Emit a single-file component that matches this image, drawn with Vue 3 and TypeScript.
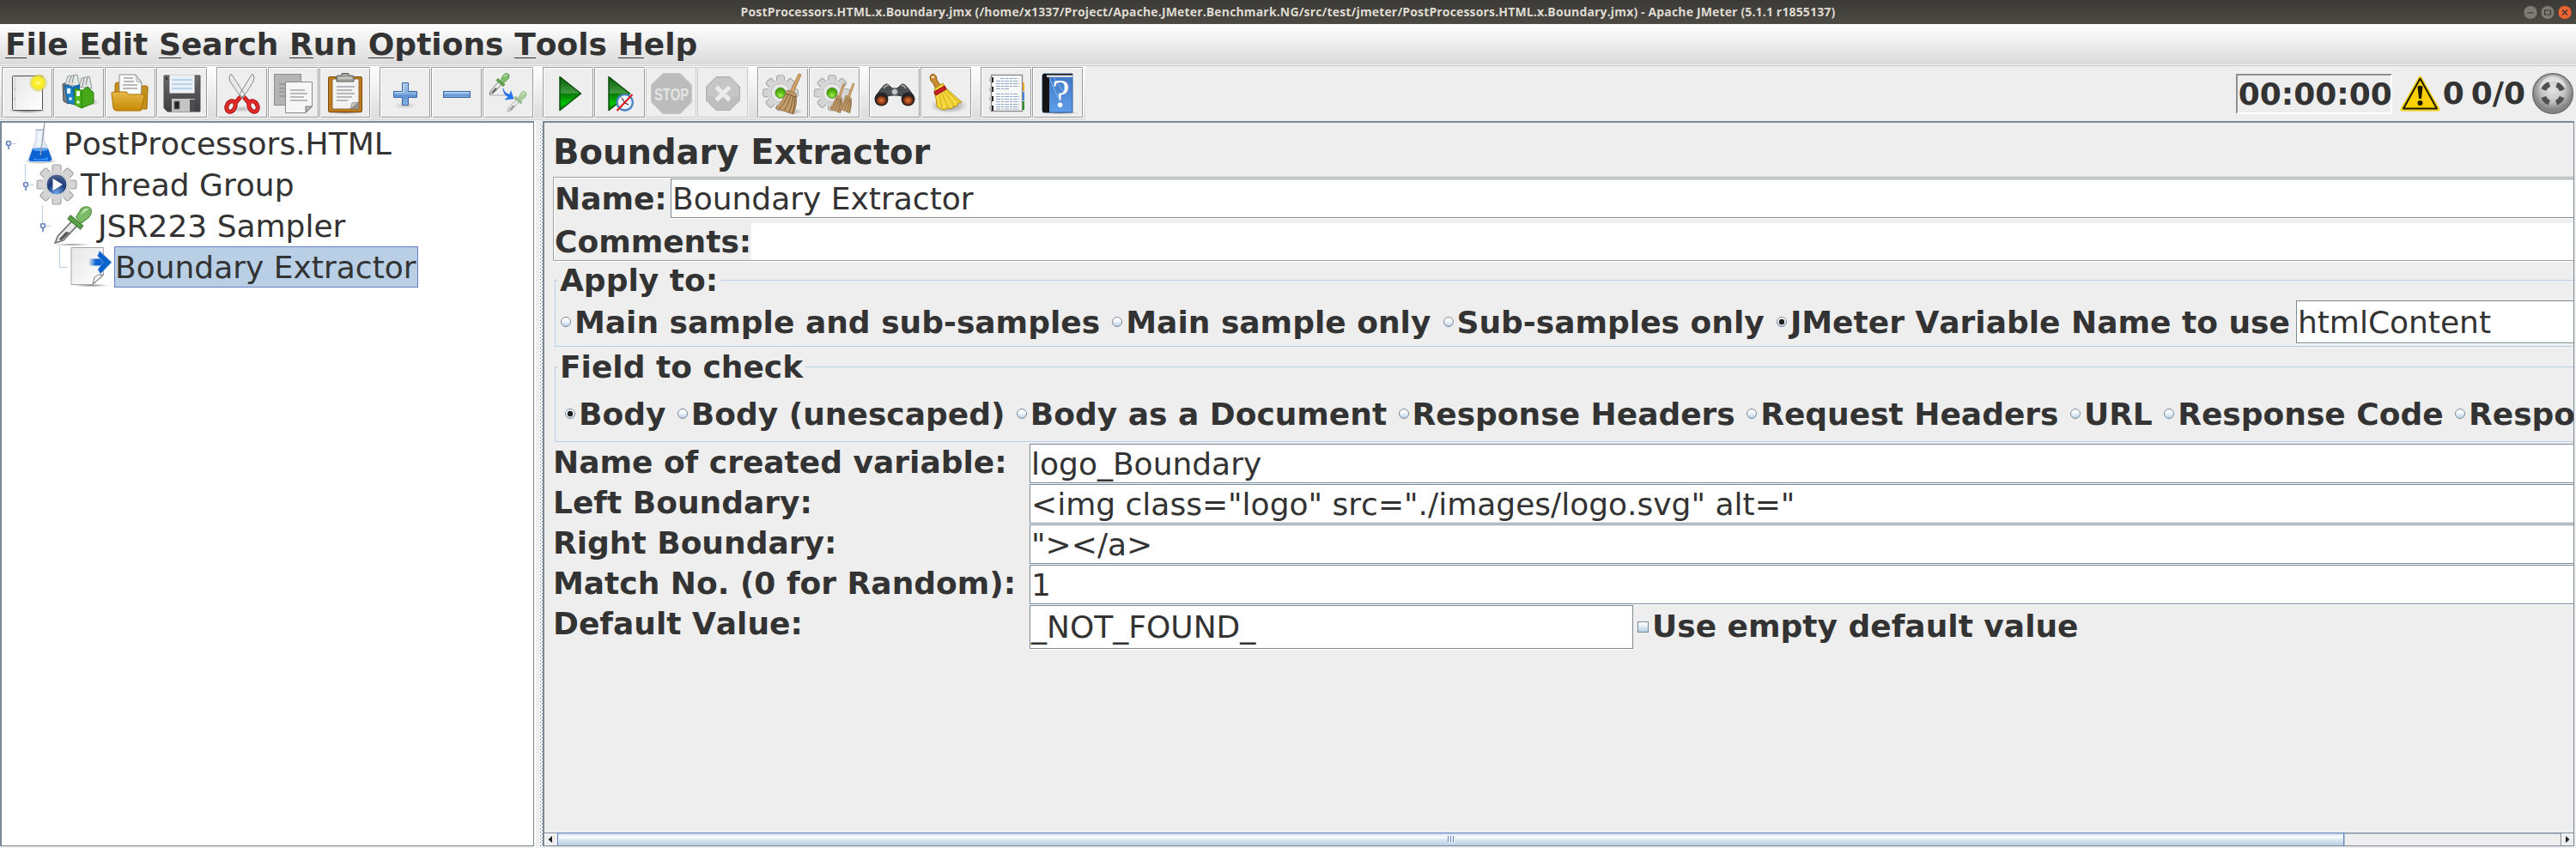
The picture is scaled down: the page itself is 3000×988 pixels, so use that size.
<script setup lang="ts">
interface Choice { label: string; selected?: boolean }
interface ToolButton { icon: string; disabled?: boolean }
interface TreeRow { icon: string; label: string; selected?: boolean }
interface Field { label: string; value: string }

const windowTitle =
  'PostProcessors.HTML.x.Boundary.jmx (/home/x1337/Project/Apache.JMeter.Benchmark.NG/src/test/jmeter/PostProcessors.HTML.x.Boundary.jmx) - Apache JMeter (5.1.1 r1855137)'

const menus: string[] = ['File', 'Edit', 'Search', 'Run', 'Options', 'Tools', 'Help']

const toolGroups: ToolButton[][] = [
  [{ icon: 'new' }, { icon: 'templates' }, { icon: 'open' }, { icon: 'save' }],
  [{ icon: 'cut' }, { icon: 'copy' }, { icon: 'paste' }],
  [{ icon: 'plus' }, { icon: 'minus' }, { icon: 'toggle' }],
  [{ icon: 'start' }, { icon: 'startNoPause' }, { icon: 'stop', disabled: true }, { icon: 'shutdown', disabled: true }],
  [{ icon: 'clear' }, { icon: 'clearAll' }],
  [{ icon: 'search' }, { icon: 'resetSearch' }],
  [{ icon: 'functions' }, { icon: 'help' }],
]

const tree: TreeRow[] = [
  { icon: 'flask', label: 'PostProcessors.HTML' },
  { icon: 'threads', label: 'Thread Group' },
  { icon: 'sampler', label: 'JSR223 Sampler' },
  { icon: 'extractor', label: 'Boundary Extractor', selected: true },
]

const applyTo: Choice[] = [
  { label: 'Main sample and sub-samples' },
  { label: 'Main sample only' },
  { label: 'Sub-samples only' },
  { label: 'JMeter Variable Name to use', selected: true },
]

const fieldToCheck: Choice[] = [
  { label: 'Body', selected: true },
  { label: 'Body (unescaped)' },
  { label: 'Body as a Document' },
  { label: 'Response Headers' },
  { label: 'Request Headers' },
  { label: 'URL' },
  { label: 'Response Code' },
  { label: 'Respo' },
]

const fields: Field[] = [
  { label: 'Name of created variable:', value: 'logo_Boundary' },
  { label: 'Left Boundary:', value: '<img class="logo" src="./images/logo.svg" alt="' },
  { label: 'Right Boundary:', value: '"></a>' },
  { label: 'Match No. (0 for Random):', value: '1' },
]

const teeth: number[] = [0, 45, 90, 135, 180, 225, 270, 315]
</script>

<template>
  <div class="window">
    <svg class="defs" width="0" height="0">
      <defs>
        <linearGradient id="gBlue" x1="0" y1="0" x2="0" y2="1"><stop offset="0" stop-color="#aecbee" /><stop offset=".5" stop-color="#86aede" /><stop offset=".55" stop-color="#5f92d0" /><stop offset="1" stop-color="#8ab4e4" /></linearGradient>
        <linearGradient id="gGreen" x1="0" y1="0" x2="0" y2="1"><stop offset="0" stop-color="#0a5c0a" /><stop offset=".48" stop-color="#3f9a3f" /><stop offset=".52" stop-color="#067a06" /><stop offset=".8" stop-color="#00c400" /><stop offset="1" stop-color="#057005" /></linearGradient>
        <linearGradient id="gFolder" x1="0" y1="0" x2="0" y2="1"><stop offset="0" stop-color="#e8b84a" /><stop offset="1" stop-color="#c78a05" /></linearGradient>
        <linearGradient id="gPage" x1="0" y1="0" x2="1" y2="1"><stop offset="0" stop-color="#e6e6e6" /><stop offset="1" stop-color="#fff" /></linearGradient>
        <linearGradient id="gDark" x1="0" y1="0" x2="0" y2="1"><stop offset="0" stop-color="#6a6a6c" /><stop offset="1" stop-color="#3e3e42" /></linearGradient>
        <linearGradient id="gFlask" x1="0" y1="0" x2="1" y2="0"><stop offset="0" stop-color="#c5d6f0" /><stop offset=".5" stop-color="#f4f8fd" /><stop offset="1" stop-color="#b4c6e6" /></linearGradient>
        <linearGradient id="gBook" x1="0" y1="0" x2="0" y2="1"><stop offset="0" stop-color="#3f78c4" /><stop offset="1" stop-color="#5f9de8" /></linearGradient>
        <linearGradient id="gArrow" x1="0" y1="0" x2="1" y2="0"><stop offset="0" stop-color="#0a63cf" stop-opacity="0" /><stop offset=".5" stop-color="#0a63cf" /></linearGradient>
        <radialGradient id="gSun"><stop offset="0" stop-color="#fffbb0" /><stop offset=".3" stop-color="#fff02a" /><stop offset=".65" stop-color="#f4e92e" /><stop offset="1" stop-color="#b5a950" stop-opacity="0" /></radialGradient>
        <radialGradient id="gShadow"><stop offset="0" stop-color="#000" stop-opacity=".45" /><stop offset="1" stop-color="#000" stop-opacity="0" /></radialGradient>
        <radialGradient id="gLed" cx=".5" cy=".75"><stop offset="0" stop-color="#a4f04a" /><stop offset="1" stop-color="#4aa80c" /></radialGradient>
        <radialGradient id="gLens"><stop offset="0" stop-color="#e0783c" /><stop offset=".7" stop-color="#8c3a16" /><stop offset="1" stop-color="#2c1a14" /></radialGradient>
        <radialGradient id="gBall" cx=".5" cy=".4"><stop offset="0" stop-color="#e4e4e4" /><stop offset=".6" stop-color="#c4c4c4" /><stop offset="1" stop-color="#858585" /></radialGradient>
        <radialGradient id="gNavy" cx=".5" cy=".9" r=".8"><stop offset="0" stop-color="#6fa4e6" /><stop offset=".6" stop-color="#1b3a78" /><stop offset="1" stop-color="#4a5f88" /></radialGradient>
        <pattern id="bumps" width="4" height="4" patternUnits="userSpaceOnUse">
          <rect x="0" y="0" width="1" height="1" fill="#fff" /><rect x="1" y="1" width="1" height="1" fill="#7a8a99" />
          <rect x="2" y="2" width="1" height="1" fill="#fff" /><rect x="3" y="3" width="1" height="1" fill="#7a8a99" />
        </pattern>
        <g id="dropper">
          <path d="M5 43 L8 35 L26 15 L32 20 L14 40 Z" fill="#e9e9e9" stroke="#6d6d6d" stroke-width="1.5" />
          <path d="M9 39 L17 30 L21 31 L12 40Z" fill="#555" />
          <path d="M22 11 L36 23 L33 27 L19 15Z" fill="#5da04a" stroke="#3d7a2c" />
          <path d="M28 13 L34 3 Q41 -2 45 4 Q46 11 40 15 L34 20Z" fill="#7cbc68" stroke="#4d8f3c" />
          <path d="M33 10 L37 4 Q40 2 42 4 Z" fill="#c3e4b8" />
        </g>
        <g id="gear">
          <rect v-for="a in teeth" :key="a" x="-4.5" y="-20.5" width="9" height="12" rx="2" fill="#d4d4d4" stroke="#a2a2a2" :transform="`rotate(${a})`" />
          <circle r="15" fill="#d6d6d6" /><circle r="11" fill="#e6e6e6" stroke="#bdbdbd" />
        </g>
        <g id="broom">
          <path d="M27 0 L30 1 L21 22 L17 21Z" fill="#d3a36a" stroke="#98703f" stroke-width=".8" />
          <path d="M14 19 L24 23 Q26 34 21 47 Q12 44 0 40 Q10 31 14 19Z" fill="#c29b6a" stroke="#8c6a40" stroke-width=".8" />
          <path d="M13 23 L24 27 M15 24 Q11 35 4 41 M18 25 Q15 37 10 43 M21 26 Q19 38 16 45 M23 27 Q23 38 20 46" fill="none" stroke="#7b5a34" stroke-width="1" />
        </g>
      </defs>
    </svg>

    <header class="titlebar">
      <span class="caption">{{ windowTitle }}</span>
      <div class="controls">
        <svg width="56" height="17" viewBox="0 0 56 17">
          <circle cx="8" cy="8.5" r="8" fill="#7c7b75" stroke="#35342f" stroke-width=".6" />
          <circle cx="28" cy="8.5" r="8" fill="#7c7b75" stroke="#35342f" stroke-width=".6" />
          <circle cx="48" cy="8.5" r="8" fill="#ec6336" stroke="#35342f" stroke-width=".6" />
          <path d="M4 9H12 M24.500 6H31.500V11H24.500Z M45 5.500L51 11.500M51 5.500L45 11.500" fill="none" stroke="#35342f" stroke-width="1.200" />
        </svg>
      </div>
    </header>

    <nav class="menubar">
      <span v-for="m in menus" :key="m" class="menu"><u>{{ m[0] }}</u>{{ m.slice(1) }}</span>
    </nav>

    <div class="toolrow">
      <div class="toolbar">
        <div v-for="(group, gi) in toolGroups" :key="gi" class="toolgroup">
          <button v-for="b in group" :key="b.icon" class="tool" :class="{ disabled: b.disabled }">
            <svg width="59" height="59" viewBox="0 0 59 59">
              <g v-if="b.icon === 'new'">
                <ellipse cx="30" cy="50" rx="22" ry="3" fill="url(#gShadow)" />
                <rect x="12.500" y="9.500" width="35" height="40" rx="1" fill="url(#gPage)" stroke="#4c4c4c" />
                <path d="M15.500 11V48" stroke="#d2d2d2" /><path d="M15 24v2M15 35v2" stroke="#aaa" />
                <circle cx="42.500" cy="17.500" r="11" fill="url(#gSun)" />
              </g>
              <g v-else-if="b.icon === 'templates'">
                <ellipse cx="36" cy="40" rx="18" ry="5" fill="url(#gShadow)" />
                <path d="M11 19L18 16V42L12 39Z" fill="#7a7f86" stroke="#474b50" />
                <path d="M14 19L17 10L28 8L31 22Z M30 22L33 12L42 10L45 24Z" fill="#e4e6e6" stroke="#8f9898" />
                <path d="M18 18L21 10M22 18L24 9M34 21L36 12M38 20L40 11" stroke="#7d8787" fill="none" />
                <path d="M13 20L22 22L26 43L17 41Z" fill="#1f83c8" stroke="#0e5a94" />
                <path d="M22 22L31 19V40L26 43Z" fill="#0f6cb4" />
                <path d="M25 24L33 26V47L25 43Z" fill="#4fb81c" stroke="#2d8a0a" />
                <path d="M33 27L40 22L47 29V41L33 47Z" fill="#46a81a" stroke="#2b8208" />
                <rect x="16" y="24" width="4" height="6" fill="#e8f2fa" /><rect x="27" y="27" width="4" height="6" fill="#eefbe8" />
                <circle cx="20" cy="36" r="1.800" fill="#e8f2fa" /><circle cx="29" cy="40" r="1.800" fill="#eefbe8" />
              </g>
              <g v-else-if="b.icon === 'open'">
                <path d="M12 20Q12 17 15 17H22V30H12Z M36 21H48Q51 21 50 25L49 48H36Z" fill="#c48f1c" stroke="#9c6c07" />
                <path d="M17 8H36L43 17L42 34H17Z" fill="#fbfbfb" stroke="#8f8f8f" /><path d="M36 8L37 16L43 18Z" fill="#d9e2de" stroke="#999" stroke-width=".7" />
                <path d="M22 12H33M22 16H34M21 20H38M21 24H38" stroke="#777" />
                <path d="M8 30Q8 28 11 28H25L28 31H44Q47 31 46 34L42 50H14Q11 50 10 47Z" fill="url(#gFolder)" stroke="#a87206" />
              </g>
              <g v-else-if="b.icon === 'save'">
                <path d="M9 9H51V51H13L9 47Z" fill="url(#gDark)" stroke="#4a4a4c" />
                <rect x="16" y="9" width="28" height="20" fill="#e9f1f8" stroke="#fff" /><path d="M18 14H42M18 19H42M18 24H42" stroke="#8fb2d4" />
                <rect x="18" y="36" width="27" height="15" fill="#c4c4c4" /><rect x="21" y="39" width="6" height="9" fill="#222" stroke="#777" /><rect x="39" y="37" width="6" height="14" fill="#4e4e50" />
                <rect x="11" y="11" width="2" height="3" fill="#2e2e30" />
              </g>
              <g v-else-if="b.icon === 'cut'">
                <ellipse cx="30" cy="48" rx="14" ry="4" fill="url(#gShadow)" opacity=".5" />
                <path d="M16 8Q14 11 16 16L29 35L33 31L18 8Q17 7 16 8Z M43 8Q45 11 43 16L31 35L27 31L41 8Q42 7 43 8Z" fill="#eaeaea" stroke="#8a8a8a" />
                <g fill="none" stroke="#a31414" stroke-width="5"><ellipse cx="17" cy="45" rx="4.800" ry="6.500" transform="rotate(28 17 45)" /><ellipse cx="43" cy="45" rx="4.800" ry="6.500" transform="rotate(-28 43 45)" /><path d="M22 41L28 34M38 41L32 34" /></g>
                <g fill="none" stroke="#e32a2a" stroke-width="3.200"><ellipse cx="17" cy="45" rx="4.800" ry="6.500" transform="rotate(28 17 45)" /><ellipse cx="43" cy="45" rx="4.800" ry="6.500" transform="rotate(-28 43 45)" /><path d="M22 41L28 34M38 41L32 34" /></g>
              </g>
              <g v-else-if="b.icon === 'copy'">
                <rect x="7.500" y="7.500" width="31" height="36" fill="#b4b4b4" stroke="#8f8f8f" /><path d="M13 19H33M13 24H33M13 28H33M13 33H20" stroke="#9a9a9a" stroke-width="2" />
                <path d="M20.500 16.500H51.500V45L44 52.500H20.500Z" fill="#f6f6f6" stroke="#8a8a8a" /><path d="M51 45H44V52Z" fill="#b9bab5" stroke="#777" />
                <path d="M26 26H43M26 30H46M26 34H42M26 38H46" stroke="#b9b9b9" stroke-width="1.800" />
              </g>
              <g v-else-if="b.icon === 'paste'">
                <ellipse cx="30" cy="52" rx="22" ry="2" fill="url(#gShadow)" />
                <rect x="10.500" y="10.500" width="39" height="41" rx="1.500" fill="#c07a1e" stroke="#7e4c0a" />
                <path d="M15 13H46V48H15Z" fill="#f3f3f3" stroke="#8f6a38" /><path d="M46 40L38 41L36 48H46Z" fill="#8d8f88" /><path d="M38 41L46 40L36 48Z" fill="#c9cac4" stroke="#777" stroke-width=".6" />
                <path d="M20 22H41M20 26H38M20 30H41M20 34H38M20 38H33" stroke="#b8b8b8" stroke-width="1.800" />
                <path d="M20 10Q20 9 22 9H26V6.500H34V9H38Q40 9 40 11V16H20Z" fill="#a3a49d" stroke="#5b5c57" /><path d="M22 12H38" stroke="#d2d3cd" stroke-width="1.500" />
              </g>
              <g v-else-if="b.icon === 'plus'">
                <ellipse cx="30" cy="44" rx="14" ry="4" fill="url(#gShadow)" opacity=".4" />
                <path d="M26.500 17.500H33.500V27.500H43.500V34.500H33.500V43.500H26.500V34.500H16.500V27.500H26.500Z" fill="url(#gBlue)" stroke="#3565a5" />
                <path d="M27.500 18.500V28.500H17.500" fill="none" stroke="#c4dbf5" />
              </g>
              <g v-else-if="b.icon === 'minus'">
                <rect x="14.500" y="27.500" width="31" height="7" fill="url(#gBlue)" stroke="#3565a5" /><path d="M15.500 28.500H44.500" stroke="#bcd5f2" />
              </g>
              <g v-else-if="b.icon === 'toggle'">
                <path d="M8 32H28" stroke="#aaa" /><use href="#dropper" transform="translate(5 6) scale(.58)" />
                <use href="#dropper" transform="translate(26 27) scale(.56)" opacity=".6" />
                <path d="M24 24Q26 31 32 31L33 27L36 36L26 37L30 34Q24 31 24 24Z" fill="#2277ee" stroke="#1a66dd" stroke-width=".6" />
              </g>
              <path v-else-if="b.icon === 'start'" d="M20 10.500L44.500 30L20 49.500Z" fill="url(#gGreen)" stroke="#0a4d0a" stroke-linejoin="round" stroke-width="1.500" />
              <g v-else-if="b.icon === 'startNoPause'">
                <path d="M17 10.500L41.500 30L17 49.500Z" fill="url(#gGreen)" stroke="#0a4d0a" stroke-linejoin="round" stroke-width="1.500" />
                <circle cx="35.700" cy="40.300" r="9.200" fill="#eef3fa" stroke="#4a82c4" stroke-width="2.400" /><path d="M32 35L36 41L40 43" fill="none" stroke="#333" stroke-width="1.200" />
                <path d="M26.500 50L44.500 31" stroke="#e01818" stroke-width="2" />
              </g>
              <g v-else-if="b.icon === 'stop'">
                <path d="M20 6.500H40L53.500 20V40L40 53.500H20L6.500 40V20Z" fill="#bcbcbc" stroke="#c6c6c6" />
                <text x="30" y="37.500" text-anchor="middle" textLength="40" lengthAdjust="spacingAndGlyphs" class="stop-text">STOP</text>
              </g>
              <g v-else-if="b.icon === 'shutdown'">
                <path d="M22 10.500H38L49.500 22V38L38 49.500H22L10.500 38V22Z" fill="#bdbdbd" stroke="#b2b2b2" />
                <path d="M12 32Q30 38 48 32V22L38 12H22L12 22Z" fill="#c6c6c6" />
                <path d="M20.500 24L24 20.500L30 26.500L36 20.500L39.500 24L33.500 30L39.500 36L36 39.500L30 33.500L24 39.500L20.500 36L26.500 30Z" fill="#ececec" />
              </g>
              <g v-else-if="b.icon === 'clear'">
                <use href="#gear" transform="translate(27 29.300)" /><circle cx="27" cy="29.300" r="6" fill="url(#gLed)" stroke="#4b8a1c" />
                <ellipse cx="42" cy="51" rx="11" ry="3.500" fill="url(#gShadow)" opacity=".6" /><use href="#broom" transform="translate(21 7)" />
              </g>
              <g v-else-if="b.icon === 'clearAll'">
                <use href="#gear" transform="translate(27 29.300)" /><circle cx="27" cy="29.300" r="6" fill="url(#gLed)" stroke="#4b8a1c" />
                <use href="#broom" transform="translate(24 18) scale(.6 .74)" /><use href="#broom" transform="translate(35 18) scale(.6 .74)" />
              </g>
              <g v-else-if="b.icon === 'search'">
                <path d="M7 36Q9 30 17 21Q21 17 24 21L27 24H33L36 21Q39 17 43 21Q51 30 53 36L42 34L34 32H26L18 34Z" fill="#4b4e53" stroke="#26282b" />
                <path d="M17 24Q20 19 23 21M43 24Q40 19 37 21" stroke="#9a9ea4" stroke-width="2" fill="none" /><circle cx="30" cy="28" r="3.500" fill="#c9cbcd" stroke="#777" />
                <circle cx="14.500" cy="36.500" r="8" fill="#26262a" /><circle cx="45.500" cy="36.500" r="8" fill="#26262a" />
                <ellipse cx="14.500" cy="38" rx="6.500" ry="5.800" fill="url(#gLens)" /><ellipse cx="45.500" cy="38" rx="6.500" ry="5.800" fill="url(#gLens)" />
              </g>
              <g v-else-if="b.icon === 'resetSearch'">
                <ellipse cx="33" cy="44" rx="22" ry="9" fill="url(#gShadow)" />
                <path d="M11 11Q12 6.500 16 7.500Q19 9 19 14L24 22L18 25Q15 17 12 15Z" fill="#c98a34" stroke="#8a5a12" /><circle cx="14.500" cy="11" r="1.300" fill="#fff" />
                <path d="M17 24L26 18L30 24L48 40Q46 41 44 41L42 45L38 45L36 48L32 47L28 49Q22 48 19 45Q19 36 16 29Z" fill="#f4d83c" stroke="#b08e0c" />
                <path d="M22 32L25 46M25 30L32 46M28 28L39 44M30 26L44 40" stroke="#c9a51a" fill="none" />
                <path d="M16 28L28 21L30 25L18 32Z" fill="#cc1f2c" stroke="#8e101a" />
              </g>
              <g v-else-if="b.icon === 'functions'">
                <rect x="44" y="17" width="7" height="10" fill="#f0b21c" /><rect x="44" y="28" width="7" height="10" fill="#3f7fe8" /><rect x="44" y="39" width="7" height="10" fill="#1b8f1b" />
                <rect x="12.500" y="8.500" width="36" height="42" fill="#fbfbfb" stroke="#8b8b8b" stroke-width="1.400" />
                <path d="M23 12.500H44M18 15.500H45M18 18.500H45M18 21.500H45M18 24.500H34M18 30.500H44M18 33.500H45M18 36.500H45M18 39.500H45M18 42.500H45M18 45.500H45M18 48H45" stroke="#8ba4c8" stroke-dasharray="5 1 3 1" stroke-width="1.200" />
                <path d="M10 14H15M10 25H15M10 36H15M10 47H15" stroke="#bbb" stroke-width="4" /><path d="M14 11v6M14 22v6M14 33v6M14 44v6" stroke="#222" stroke-width="2" />
              </g>
              <g v-else>
                <ellipse cx="32" cy="52.500" rx="23" ry="1.500" fill="url(#gShadow)" />
                <path d="M12 9Q12 7 14 7H47V52H14Q12 52 12 50Z" fill="url(#gBook)" stroke="#31609e" /><path d="M12 9Q12 7 14 7H47V11H20V52H14Q12 52 12 50Z" fill="#141414" />
                <path d="M17 8.500H47V11H17Z" fill="#d8dde2" /><path d="M20 12L30 34M26 12L38 30" stroke="#9cc2f2" stroke-width=".8" />
                <text x="33.500" y="46" text-anchor="middle" class="help-mark">?</text>
              </g>
            </svg>
          </button>
        </div>
      </div>
      <div class="status">
        <div class="timer">00:00:00</div>
        <svg class="warn" width="47" height="42" viewBox="0 0 47 42"><path d="M23.500 2.500L44.500 39.500H2.500Z" fill="#fad000" stroke="#f2d21c" stroke-width="4" stroke-linejoin="round" /><path d="M23.500 3.500L43 38.500H4Z" fill="#fad000" stroke="#1e1b00" stroke-width="2" stroke-linejoin="round" /><path d="M20.500 13Q23.500 10.500 26.500 13L25 27H22Z" fill="#1e1b00" /><circle cx="23.500" cy="32" r="3" fill="#1e1b00" /></svg>
        <span class="errors">0</span>
        <span class="threads">0/0</span>
        <svg width="48" height="48" viewBox="0 0 48 48"><circle cx="24" cy="24" r="23.300" fill="url(#gBall)" stroke="#6d6d6d" stroke-width="1.400" /><path d="M8 18Q12 4 24 4T40 18Q32 10 24 10T8 18Z" fill="#eee" opacity=".6" /><circle cx="24" cy="24" r="11.500" fill="none" stroke="#505050" stroke-width="6" stroke-dasharray="9.500 8.560" stroke-dashoffset="-4.300" /></svg>
      </div>
    </div>

    <main class="split">
      <aside class="tree">
        <div v-for="(row, i) in tree" :key="row.label" class="tree-row" :style="{ paddingLeft: i * 20 + 'px' }">
          <svg class="handle" width="20" height="48" viewBox="0 0 20 48">
            <path v-if="row.selected" d="M7.500 0V24.500H17" fill="none" stroke="#b8cfe5" />
            <g v-else fill="none"><path v-if="i > 0" d="M7.500 0V20" stroke="#b8cfe5" /><path d="M12 24.500H17" stroke="#b8cfe5" /><circle cx="8" cy="24" r="2.500" stroke="#6382bf" stroke-width="1.600" /><path d="M8 27V31" stroke="#6382bf" stroke-width="1.600" /></g>
          </svg>
          <svg width="48" height="48" viewBox="0 0 48 48">
            <g v-if="row.icon === 'flask'">
              <ellipse cx="25" cy="45" rx="20" ry="3" fill="url(#gShadow)" />
              <path d="M20 8H29V20L39 42Q39 46 35 46H14Q10 46 11 42L20 20Z" fill="url(#gFlask)" stroke="#b9c6da" stroke-width=".8" />
              <path d="M16 30H34L38 42Q38 45 34 45H15Q11 45 12 42Z" fill="#0b62d0" /><ellipse cx="25" cy="31" rx="9" ry="2" fill="#5aa0f0" /><path d="M17 41Q24 44 34 40V44H17Z" fill="#2f8af2" />
              <path d="M30 0L25 38" stroke="#9aa3ad" stroke-width="1.400" /><path d="M20 8Q24 10 29 8" stroke="#8f9fb8" fill="none" />
            </g>
            <g v-else-if="row.icon === 'threads'">
              <use href="#gear" transform="translate(24 24) scale(1.120)" /><circle cx="24" cy="24" r="12" fill="url(#gNavy)" stroke="#e8e8e8" stroke-width="1" /><path d="M19.500 17L31 24L19.500 31Z" fill="#fff" />
            </g>
            <g v-else-if="row.icon === 'sampler'"><ellipse cx="22" cy="46" rx="22" ry="1.600" fill="url(#gShadow)" /><use href="#dropper" transform="translate(-3 1) scale(1.050 1)" /></g>
            <g v-else>
              <ellipse cx="24" cy="45.500" rx="21" ry="2" fill="url(#gShadow)" /><path d="M1 1.500H38.500V34L26 44.500H1Z" fill="url(#gPage)" stroke="#a5a5a5" /><path d="M38 33Q32 32 28 36L26 44Z" fill="#fff" stroke="#777" />
              <path d="M21 14.500H38V22.500H21Z" fill="url(#gArrow)" /><path d="M34 5.500L48 18.500L35 32L32 27L38 18.500L31.500 11Z" fill="#0b62cc" stroke="#7ba9e0" stroke-width=".8" />
            </g>
          </svg>
          <span class="node" :class="{ selected: row.selected }">{{ row.label }}</span>
        </div>
      </aside>

      <div class="divider"><svg width="4" height="842"><rect width="4" height="842" fill="url(#bumps)" /></svg></div>

      <section class="editor">
        <div class="form">
          <h1>Boundary Extractor</h1>
          <div class="namebox">
            <div class="namerow"><label>Name:</label><div class="field grow">Boundary Extractor</div></div>
            <div class="commentrow"><label>Comments:</label><div class="comment"></div></div>
          </div>

          <div class="group apply">
            <span class="legend">Apply to:</span>
            <div class="choices">
              <div v-for="c in applyTo" :key="c.label" class="choice"><i class="radio" :class="{ on: c.selected }"></i><span>{{ c.label }}</span></div>
              <div class="field grow tall">htmlContent</div>
            </div>
          </div>

          <div class="group check">
            <span class="legend">Field to check</span>
            <div class="choices">
              <div v-for="c in fieldToCheck" :key="c.label" class="choice"><i class="radio" :class="{ on: c.selected }"></i><span>{{ c.label }}</span></div>
            </div>
          </div>

          <div class="variables">
            <div v-for="f in fields" :key="f.label" class="varrow"><label>{{ f.label }}</label><div class="field grow">{{ f.value }}</div></div>
            <div class="varrow"><label>Default Value:</label><div class="field default">_NOT_FOUND_</div><i class="checkbox"></i><span class="empty">Use empty default value</span></div>
          </div>
        </div>

        <div class="scrollbar">
          <div class="arrow"><svg width="14" height="14"><path d="M9 3V11L4.500 7Z" fill="#222" /></svg></div>
          <div class="thumb"><svg width="8" height="8"><path d="M.5 0V7M3.500 0V7M6.500 0V7" stroke="#6382bf" /><path d="M1.500 1V8M4.500 1V8M7.500 1V8" stroke="#fff" /></svg></div>
          <div class="track"></div>
          <div class="arrow end"><svg width="14" height="14"><path d="M5 3V11L9.500 7Z" fill="#222" /></svg></div>
        </div>
      </section>
    </main>
  </div>
</template>

<style>
html, body { margin: 0; overflow: hidden; background: #eee; }
</style>

<style scoped>
* { box-sizing: border-box; }
.window { width: 3000px; height: 988px; overflow: hidden; background: #eee; color: #333; font: 36px/42px "DejaVu Sans", sans-serif; font-kerning: none; font-variant-ligatures: none; white-space: pre; display: flex; flex-direction: column; }
.defs { position: absolute; }
svg { display: block; flex: none; }

.titlebar { flex: none; height: 28px; background: linear-gradient(#3b3a36, #4b4a44); display: grid; grid-template-columns: 1fr auto 1fr; align-items: center; }
.caption { grid-column: 2; color: #dfdbd2; font: bold 14px/28px "Open Sans", "Noto Sans", sans-serif; letter-spacing: .153px; }
.controls { justify-self: end; padding-right: 5px; }

.menubar { flex: none; height: 49px; padding: 3px 0 0 6px; background: linear-gradient(#fff, #dadada); border-bottom: 1px solid #ccc; box-shadow: inset 0 -1px #eee; font-weight: bold; display: flex; gap: 12.7px; line-height: 42px; }
.menu u { text-decoration: none; border-bottom: 1px solid #333; display: inline-block; line-height: 36px; height: 34px; }

.toolrow { flex: none; height: 64px; display: flex; justify-content: space-between; }
.toolbar { width: 1264px; height: 64px; padding: 1px 0 0 2px; background: linear-gradient(#fff, #ddd 60px, #eee 61px, #ccc 62px, #eee 63px); display: flex; gap: 10px; }
.toolgroup { display: flex; }
.tool { width: 60px; height: 60px; padding: 0; margin: 0; border: 0; background: #eee; box-shadow: inset -1px -1px #fff, inset 1px 1px #999, inset 2px 2px #fff, inset -2px -2px #999; }
.tool.disabled { box-shadow: inset -1px -1px #f2f2f2, inset 1px 1px #ccc, inset -2px -2px #ccc; }
.stop-text { font: bold 21px "Liberation Sans", sans-serif; fill: #e4e4e4; }
.help-mark { font: 46px "Liberation Serif", serif; fill: #fff; }

.status { display: flex; align-items: center; height: 64px; padding-right: 3px; font-weight: bold; }
.timer { width: 182px; height: 47px; border: 2px solid; border-color: #8f8f8f #fff #fff #8f8f8f; padding-left: 1px; line-height: 44px; }
.warn { margin: 0 3px 0 9px; }
.errors { margin-right: 8px; }
.threads { margin-right: 8px; }

.split { flex: none; height: 847px; display: flex; }
.tree { width: 622px; height: 845px; border: 1px solid #7a8a99; border-width: 2px 1px 1px 2px; background: #fff; }
.tree-row { height: 48px; display: flex; }
.node { height: 48px; line-height: 48px; margin-left: 3px; padding-right: 1px; border: 1px solid transparent; }
.node.selected { background: #b8cfe5; border-color: #6382bf; }
.divider { width: 10px; padding: 3px 0 0 4px; border-left: 2px solid #fff; }

.editor { width: 2366px; height: 845px; border: solid #7a8a99; border-width: 2px 1px 1px 2px; display: flex; flex-direction: column; overflow: hidden; }
.form { height: 827px; overflow: hidden; }
h1 { margin: 0; height: 63px; padding: 5px 0 0 10px; font: bold 40px/58px "DejaVu Sans", sans-serif; }
label, .choice, .legend, .empty { font-weight: bold; }
.field { background: #fff; border: 1px solid #7a8a99; box-shadow: 0 1px #fff; height: 46px; line-height: 46px; padding-left: 1px; }
.grow { flex: 1; border-right: 0; }

.namebox { margin-left: 10px; height: 98px; border: 1px solid #a0a0a0; border-right: 0; box-shadow: inset 1px 1px #fff, 0 1px #fff; padding-top: 1px; }
.namerow { display: flex; height: 46px; }
.namerow label { width: 136px; line-height: 48px; padding-left: 1px; }
.commentrow { display: flex; height: 43px; margin-top: 6px; }
.commentrow label { width: 230px; line-height: 43px; padding-left: 1px; }
.comment { flex: 1; background: #fff; }

.group { margin-left: 12px; border: 1px solid #b8cfe5; border-right: 0; display: flex; flex-direction: column; align-items: flex-start; }
.apply { margin-top: 22px; height: 78px; }
.check { margin-top: 23px; height: 88px; }
.legend { background: #eee; margin: -21px 0 0 3px; padding: 0 3px 0 2px; height: 42px; }
.choices { display: flex; align-items: center; align-self: stretch; height: 50px; margin-top: 2px; padding-left: 6px; }
.check .choices { padding-left: 11px; margin-top: 8px; }
.choice { display: flex; align-items: center; flex: none; margin-right: 13.4px; }
.choice span { padding-top: 2px; }
.apply .choice { margin-right: 14.2px; }
.apply .choice:nth-child(4) { margin-right: 7px; }
.tall { height: 50px; line-height: 50px; }
.radio { width: 12px; height: 12px; margin-right: 4px; border: 1px solid #7a8a99; border-radius: 50%; background: linear-gradient(#fff 30%, #b8cfe5); }
.radio.on { background: radial-gradient(circle, #222 0 3px, transparent 3.6px), linear-gradient(#fff 30%, #b8cfe5); }

.variables { margin-top: 2px; }
.varrow { height: 47px; display: flex; padding-left: 10px; }
.varrow label { width: 555px; line-height: 44px; }
.varrow .default { width: 703px; height: 51px; line-height: 50px; }
.checkbox { width: 13px; height: 13px; margin: 19px 4px 0 5px; border: 1px solid #7a8a99; background: linear-gradient(#fff 10%, #b8cfe5); }
.empty { line-height: 50px; }

.scrollbar { height: 15px; display: flex; border-top: 1px solid #7a8a99; }
.arrow { width: 15px; background: #eee; box-shadow: inset 1px 1px #fff; }
.arrow.end { border-left: 1px solid #7a8a99; }
.thumb { width: 2081px; margin-top: -1px; height: 15px; border: 1px solid #6382bf; border-bottom: 0; background: linear-gradient(#c8d8ee, #fff 4px, #dde8f3 7px, #b8cfe5); display: flex; align-items: center; justify-content: center; }
.track { flex: 1; box-shadow: inset 1px 1px #b8c8dc; }
</style>
